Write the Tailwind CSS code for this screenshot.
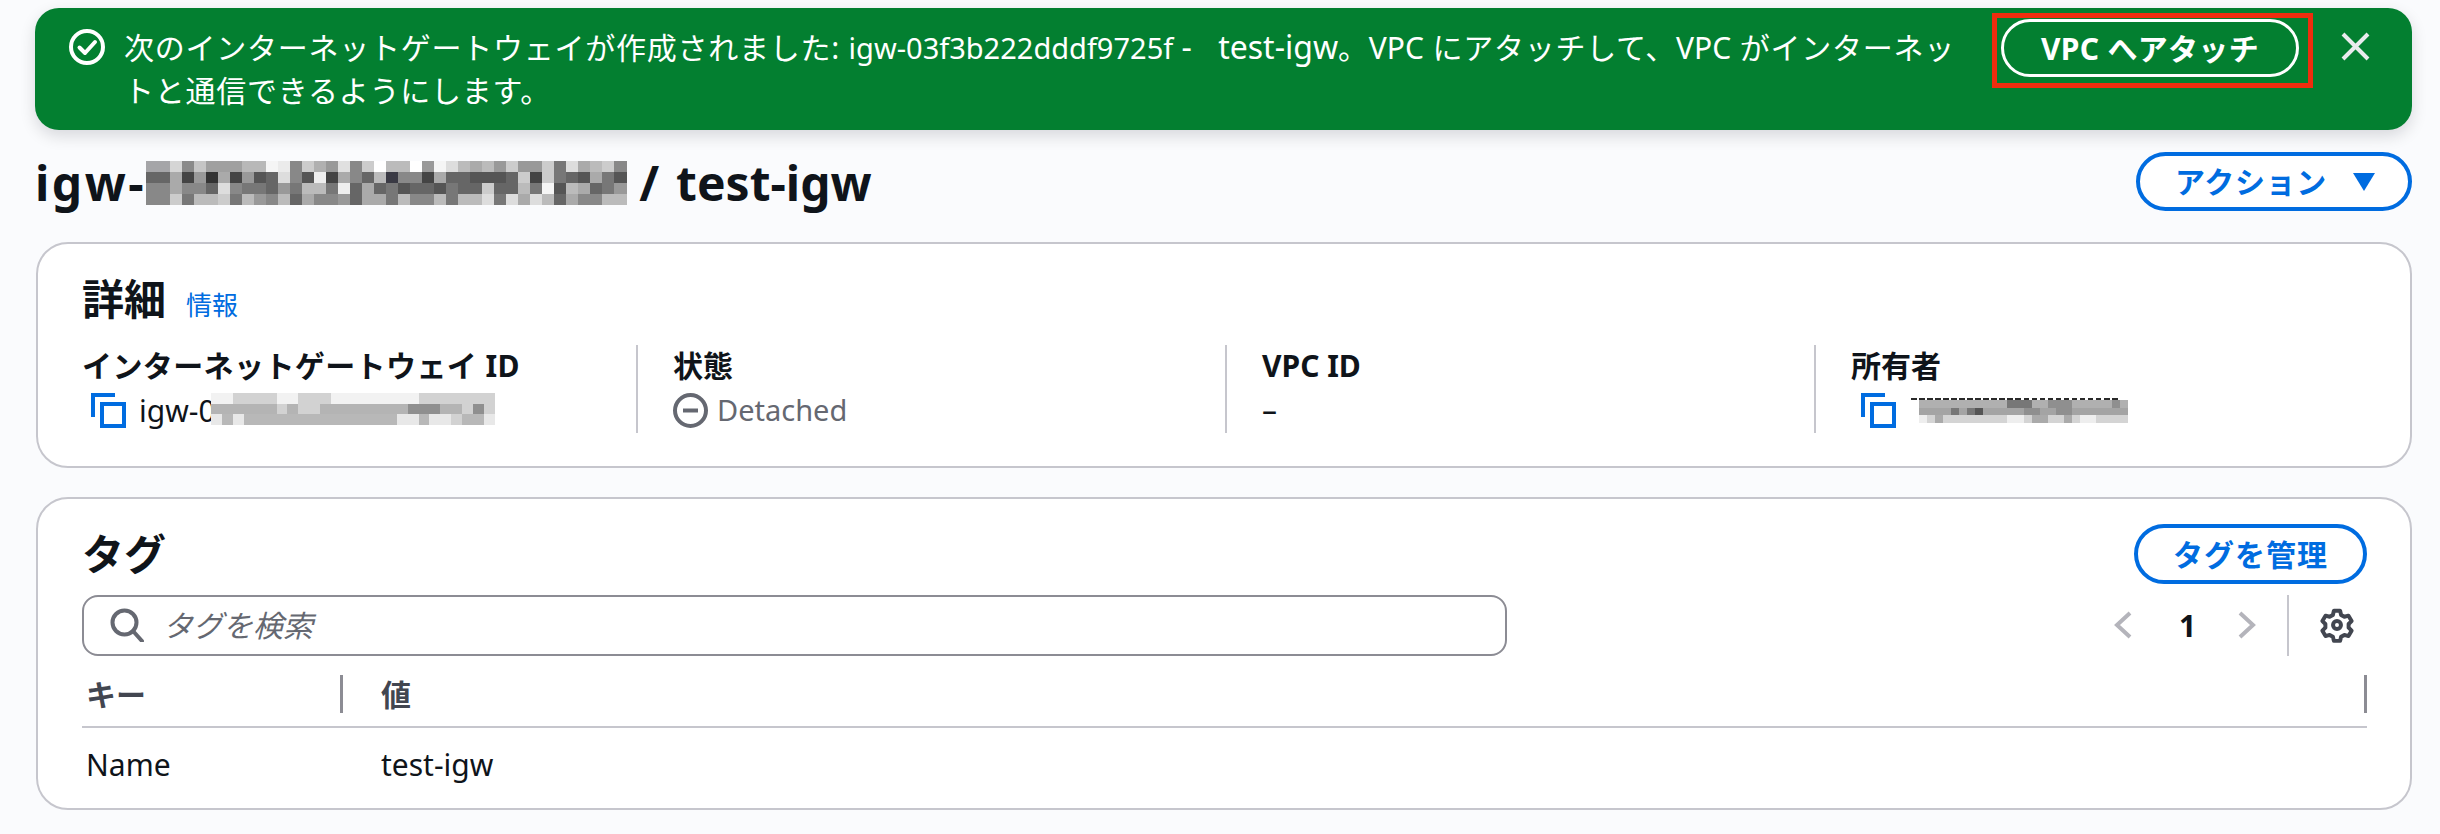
<!DOCTYPE html>
<html lang="ja">
<head>
<meta charset="utf-8">
<script src="https://cdn.jsdelivr.net/npm/@tailwindcss/browser@4"></script>
</head>
<body class="bg-[#fafbfd] w-[2440px] h-[834px] overflow-hidden font-['Noto_Sans','Noto_Sans_CJK_JP',sans-serif] text-[#0f141a] text-[30px]">
<div class="pl-[35px] pr-[28px] pt-[8px]">
  <!-- flash -->
  <div class="relative h-[122px] bg-[#037f30] rounded-[24px] shadow-[0_6px_16px_rgba(0,7,22,0.14)] flex text-white pl-[33px] pr-[42px]">
    <svg class="w-[38px] h-[38px] mt-[20px] shrink-0" viewBox="0 0 38 38" fill="none" stroke="#fff" stroke-width="4"><circle cx="19" cy="19" r="16"/><path d="M11.5 19.5l5.5 5.5 10-11" stroke-linecap="round" stroke-linejoin="round"/></svg>
    <div class="ml-[18px] w-[1877px] leading-[43px] pt-[17px] tracking-[0.75px] shrink-0">次のインターネットゲートウェイが作成されました: <span class="text-[29px] tracking-normal">igw-03f3b222dddf9725f</span><span class="text-[32px] tracking-normal"> <span class="mr-[18px]">-</span> test-igw</span>。<span class="tracking-normal">VPC</span> にアタッチして、<span class="tracking-normal">VPC</span> がインターネッ<br>トと通信できるようにします。</div>
    <div class="mt-[11px] w-[298px] h-[58px] border-[3px] border-white rounded-full flex items-center justify-center font-bold shrink-0 tracking-[0.3px]">VPC へアタッチ</div>
    <svg class="ml-[42px] mt-[24px] w-[29px] h-[29px] shrink-0" viewBox="0 0 29 29" fill="none" stroke="#e9ebed" stroke-width="4"><path d="M2 2l25 25M27 2L2 27"/></svg>
    <div class="absolute left-[1957px] top-[5px] w-[321px] h-[75px] border-[5px] border-[#ef2d0e]"></div>
  </div>

  <!-- title -->
  <div class="flex items-center justify-between mt-[22px] h-[59px]">
    <h1 class="flex items-center text-[48px] font-bold leading-[59px] whitespace-nowrap pt-[2px]"><span class="tracking-[2.5px]">igw-</span><svg class="w-[481px] h-[44px]" viewBox="42 27 1443 132" preserveAspectRatio="none" shape-rendering="crispEdges"><g>
<rect x="42" y="27" width="73" height="33" fill="#a5a5a8"/><rect x="115" y="27" width="35" height="33" fill="#d5d5d5"/><rect x="150" y="27" width="37" height="33" fill="#8a8a8a"/><rect x="187" y="27" width="36" height="33" fill="#c5c5c5"/><rect x="223" y="27" width="107" height="33" fill="#a0a0a0"/><rect x="330" y="27" width="73" height="33" fill="#b8b8b8"/><rect x="403" y="27" width="36" height="33" fill="#f5f5f5"/><rect x="439" y="27" width="36" height="33" fill="#ebebeb"/><rect x="475" y="27" width="36" height="33" fill="#888"/><rect x="511" y="27" width="36" height="33" fill="#ccc"/><rect x="547" y="27" width="36" height="33" fill="#b0b0b0"/><rect x="583" y="27" width="36" height="33" fill="#999"/><rect x="619" y="27" width="36" height="33" fill="#e0e0e0"/><rect x="655" y="27" width="36" height="33" fill="#888"/><rect x="691" y="27" width="36" height="33" fill="#ccc"/><rect x="727" y="27" width="36" height="33" fill="#fff"/><rect x="763" y="27" width="72" height="33" fill="#bbb"/><rect x="835" y="27" width="36" height="33" fill="#fff"/><rect x="871" y="27" width="36" height="33" fill="#999"/><rect x="907" y="27" width="36" height="33" fill="#f5f5f5"/><rect x="943" y="27" width="36" height="33" fill="#ddd"/><rect x="979" y="27" width="36" height="33" fill="#bbb"/><rect x="1015" y="27" width="36" height="33" fill="#aaa"/><rect x="1051" y="27" width="36" height="33" fill="#bbb"/><rect x="1087" y="27" width="36" height="33" fill="#999"/><rect x="1123" y="27" width="36" height="33" fill="#ccc"/><rect x="1159" y="27" width="72" height="33" fill="#999"/><rect x="1231" y="27" width="36" height="33" fill="#ccc"/><rect x="1267" y="27" width="36" height="33" fill="#777"/><rect x="1303" y="27" width="36" height="33" fill="#ddd"/><rect x="1339" y="27" width="36" height="33" fill="#aaa"/><rect x="1375" y="27" width="36" height="33" fill="#bbb"/><rect x="1411" y="27" width="36" height="33" fill="#ccc"/><rect x="1447" y="27" width="38" height="33" fill="#888"/>
<rect x="42" y="60" width="73" height="33" fill="#666"/><rect x="115" y="60" width="35" height="33" fill="#aaa"/><rect x="150" y="60" width="37" height="33" fill="#444"/><rect x="187" y="60" width="36" height="33" fill="#999"/><rect x="223" y="60" width="36" height="33" fill="#333"/><rect x="259" y="60" width="36" height="33" fill="#aaa"/><rect x="295" y="60" width="36" height="33" fill="#444"/><rect x="331" y="60" width="36" height="33" fill="#999"/><rect x="367" y="60" width="36" height="33" fill="#555"/><rect x="403" y="60" width="36" height="33" fill="#666"/><rect x="439" y="60" width="36" height="33" fill="#ddd"/><rect x="475" y="60" width="36" height="33" fill="#888"/><rect x="511" y="60" width="36" height="33" fill="#555"/><rect x="547" y="60" width="36" height="33" fill="#eee"/><rect x="583" y="60" width="36" height="33" fill="#444"/><rect x="619" y="60" width="36" height="33" fill="#aaa"/><rect x="655" y="60" width="36" height="33" fill="#888"/><rect x="691" y="60" width="36" height="33" fill="#666"/><rect x="727" y="60" width="36" height="33" fill="#bbb"/><rect x="763" y="60" width="36" height="33" fill="#3a3a44"/><rect x="799" y="60" width="72" height="33" fill="#888"/><rect x="871" y="60" width="36" height="33" fill="#444"/><rect x="907" y="60" width="36" height="33" fill="#aaa"/><rect x="943" y="60" width="72" height="33" fill="#666"/><rect x="1015" y="60" width="108" height="33" fill="#555"/><rect x="1123" y="60" width="36" height="33" fill="#666"/><rect x="1159" y="60" width="36" height="33" fill="#ccc"/><rect x="1195" y="60" width="36" height="33" fill="#444"/><rect x="1231" y="60" width="36" height="33" fill="#ccc"/><rect x="1267" y="60" width="36" height="33" fill="#777"/><rect x="1303" y="60" width="36" height="33" fill="#666"/><rect x="1339" y="60" width="36" height="33" fill="#555"/><rect x="1375" y="60" width="36" height="33" fill="#aaa"/><rect x="1411" y="60" width="36" height="33" fill="#777"/><rect x="1447" y="60" width="38" height="33" fill="#555"/>
<rect x="42" y="93" width="73" height="33" fill="#888"/><rect x="115" y="93" width="35" height="33" fill="#aaa"/><rect x="150" y="93" width="73" height="33" fill="#888"/><rect x="223" y="93" width="36" height="33" fill="#666"/><rect x="259" y="93" width="36" height="33" fill="#ddd"/><rect x="295" y="93" width="36" height="33" fill="#888"/><rect x="331" y="93" width="72" height="33" fill="#777"/><rect x="403" y="93" width="36" height="33" fill="#666"/><rect x="439" y="93" width="36" height="33" fill="#999"/><rect x="475" y="93" width="36" height="33" fill="#777"/><rect x="511" y="93" width="72" height="33" fill="#bbb"/><rect x="583" y="93" width="36" height="33" fill="#777"/><rect x="619" y="93" width="36" height="33" fill="#eee"/><rect x="655" y="93" width="36" height="33" fill="#666"/><rect x="691" y="93" width="36" height="33" fill="#aaa"/><rect x="727" y="93" width="36" height="33" fill="#666"/><rect x="763" y="93" width="36" height="33" fill="#777"/><rect x="799" y="93" width="36" height="33" fill="#555"/><rect x="835" y="93" width="72" height="33" fill="#666"/><rect x="907" y="93" width="36" height="33" fill="#555"/><rect x="943" y="93" width="36" height="33" fill="#777"/><rect x="979" y="93" width="72" height="33" fill="#666"/><rect x="1051" y="93" width="36" height="33" fill="#ccc"/><rect x="1087" y="93" width="72" height="33" fill="#666"/><rect x="1159" y="93" width="36" height="33" fill="#bbb"/><rect x="1195" y="93" width="36" height="33" fill="#777"/><rect x="1231" y="93" width="36" height="33" fill="#f5f5f5"/><rect x="1267" y="93" width="36" height="33" fill="#555"/><rect x="1303" y="93" width="36" height="33" fill="#bbb"/><rect x="1339" y="93" width="36" height="33" fill="#aaa"/><rect x="1375" y="93" width="36" height="33" fill="#666"/><rect x="1411" y="93" width="36" height="33" fill="#777"/><rect x="1447" y="93" width="38" height="33" fill="#999"/>
<rect x="42" y="126" width="73" height="33" fill="#888"/><rect x="115" y="126" width="35" height="33" fill="#ccc"/><rect x="150" y="126" width="37" height="33" fill="#777"/><rect x="187" y="126" width="72" height="33" fill="#bbb"/><rect x="259" y="126" width="36" height="33" fill="#ccc"/><rect x="295" y="126" width="36" height="33" fill="#777"/><rect x="331" y="126" width="36" height="33" fill="#bbb"/><rect x="367" y="126" width="36" height="33" fill="#999"/><rect x="403" y="126" width="36" height="33" fill="#888"/><rect x="439" y="126" width="36" height="33" fill="#bbb"/><rect x="475" y="126" width="36" height="33" fill="#666"/><rect x="511" y="126" width="36" height="33" fill="#aaa"/><rect x="547" y="126" width="72" height="33" fill="#888"/><rect x="619" y="126" width="36" height="33" fill="#999"/><rect x="655" y="126" width="36" height="33" fill="#666"/><rect x="691" y="126" width="72" height="33" fill="#aaa"/><rect x="763" y="126" width="36" height="33" fill="#777"/><rect x="799" y="126" width="36" height="33" fill="#bbb"/><rect x="835" y="126" width="72" height="33" fill="#888"/><rect x="907" y="126" width="36" height="33" fill="#bbb"/><rect x="943" y="126" width="36" height="33" fill="#777"/><rect x="979" y="126" width="72" height="33" fill="#bbb"/><rect x="1051" y="126" width="36" height="33" fill="#ddd"/><rect x="1087" y="126" width="36" height="33" fill="#777"/><rect x="1123" y="126" width="36" height="33" fill="#ddd"/><rect x="1159" y="126" width="36" height="33" fill="#aaa"/><rect x="1195" y="126" width="36" height="33" fill="#ddd"/><rect x="1231" y="126" width="36" height="33" fill="#bbb"/><rect x="1267" y="126" width="36" height="33" fill="#666"/><rect x="1303" y="126" width="36" height="33" fill="#aaa"/><rect x="1339" y="126" width="72" height="33" fill="#888"/><rect x="1411" y="126" width="74" height="33" fill="#bbb"/>
</g></svg><span class="ml-[12px] mr-[17px]">/</span>test-igw</h1>
    <div class="w-[276px] h-[59px] border-[4px] border-[#006ce0] rounded-full bg-white flex items-center pl-[35px] text-[#006ce0] font-bold shrink-0 tracking-[0.7px]">アクション<svg class="ml-[26px] w-[22px] h-[18px]" viewBox="0 0 22 18" fill="#006ce0"><path d="M0 0h22L11 18z"/></svg></div>
  </div>

  <!-- details card -->
  <div class="ml-[1px] mt-[31px] h-[226px] bg-white rounded-[32px] border-2 border-[#c6c6cd] pl-[44px] pt-[25px]">
    <div class="flex items-baseline h-[60px]"><span class="text-[42px] font-bold leading-[60px]">詳細</span><span class="ml-[20px] text-[26px] text-[#006ce0]">情報</span></div>
    <div class="grid grid-cols-[554px_589px_589px_1fr] mt-[16px]">
      <div class="h-[88px]">
        <div class="font-bold leading-[42px] h-[44px] tracking-[0.4px]">インターネットゲートウェイ ID</div>
        <div class="flex items-center h-[42px]"><svg class="w-[35px] h-[35px] ml-[9px] mr-[13px]" viewBox="0 0 35 35" fill="none" stroke="#006ce0" stroke-width="4"><path d="M2 24V2h22"/><path d="M11 11h22v22H11z"/></svg><span class="whitespace-pre">igw-0</span><svg class="w-[284px] h-[32px] ml-[-5px] mb-[2px]" viewBox="0 0 26 3" preserveAspectRatio="none" shape-rendering="crispEdges"><path fill="#e4e4e4" d="M0 0h26v1H0z"/><path fill="#b4b4b4" d="M0 1h26v1H0z"/><path fill="#b8b8b8" d="M0 2h26v1H0z"/><path fill="#f2f2f2" d="M0 0h2v1H0zM6 0h2v1H6zM11 0h8v1h-8z"/><path fill="#d2d2d2" d="M2 0h4v1H2zM8 0h3v1H8zM19 0h7v1h-7zM6 1h1v1H6zM8 1h2v1H8zM23 1h3v1h-3zM22 2h1v1h-1z"/><path fill="#8f8f8f" d="M18 1h3v1h-3zM24 1h1v1h-1z"/><path fill="#e8e8e8" d="M0 2h1v1H0zM2 2h1v1H2zM17 2h2v1h-2zM20 2h2v1h-2zM25 2h1v1h-1z"/></svg></div>
      </div>
      <div class="border-l-2 border-[#c6c6cd] pl-[35px] h-[88px]">
        <div class="font-bold leading-[42px] h-[44px]">状態</div>
        <div class="flex items-center h-[42px] text-[#656871] text-[29px]"><svg class="w-[35px] h-[35px] mr-[9px]" viewBox="0 0 35 35" fill="none" stroke="#656871" stroke-width="4"><circle cx="17.500" cy="17.500" r="15.500"/><path d="M10 17.500h15"/></svg>Detached</div>
      </div>
      <div class="border-l-2 border-[#c6c6cd] pl-[35px] h-[88px]">
        <div class="font-bold leading-[42px] h-[44px]">VPC ID</div>
        <div class="h-[42px] leading-[42px]">–</div>
      </div>
      <div class="border-l-2 border-[#c6c6cd] pl-[35px] h-[88px]">
        <div class="font-bold leading-[42px] h-[44px]">所有者</div>
        <div class="flex items-center h-[42px]"><svg class="w-[35px] h-[35px] ml-[10px] mr-[14px]" viewBox="0 0 35 35" fill="none" stroke="#006ce0" stroke-width="4"><path d="M2 24V2h22"/><path d="M11 11h22v22H11z"/></svg><svg class="w-[217px] h-[25px] ml-[1px]" viewBox="0 0 27 3.300" preserveAspectRatio="none" shape-rendering="crispEdges"><path stroke="#2a2a2a" stroke-width=".3" stroke-dasharray=".7 .3" fill="none" d="M0 .15h26"/><path fill="#b0b0b0" d="M1 .3h26v1H1z"/><path fill="#a4a4a4" d="M1 1.300h26v1H1z"/><path fill="#d4d4d4" d="M1 2.300h26v1H1z"/><path fill="#777" d="M5 1.300h1v1H5zM7 1.300h1v1H7zM12 .3h3v1h-3z"/><path fill="#555" d="M8 1.300h1v1H8z"/><path fill="#8f8f8f" d="M14 1.300h2v1h-2zM18 1.300h2v1h-2zM17 .3h3v1h-3zM25 .3h1v1h-1z"/><path fill="#eee" d="M1 2.300h1v1H1zM12 2.300h2v1h-2zM21 2.300h2v1h-2z"/><path fill="#aaa" d="M3 2.300h1v1H3zM15 2.300h2v1h-2zM19 2.300h1v1h-1z"/></svg></div>
      </div>
    </div>
  </div>

  <!-- tags card -->
  <div class="ml-[1px] mt-[29px] h-[313px] bg-white rounded-[32px] border-2 border-[#c6c6cd] pl-[44px] pr-[43px]">
    <div class="flex justify-between items-start pt-[25px] h-[95px]">
      <span class="text-[42px] font-bold leading-[60px]">タグ</span>
      <div class="w-[233px] h-[60px] border-[4px] border-[#006ce0] rounded-full flex items-center justify-center text-[#006ce0] font-bold tracking-[1px]">タグを管理</div>
    </div>
    <div class="flex items-center h-[62px]">
      <div class="w-[1425px] h-[61px] border-2 border-[#8c8c94] rounded-[16px] flex items-center pl-[26px] text-[#656871] italic shrink-0">
        <svg class="w-[34px] h-[34px] mr-[19px] shrink-0" viewBox="0 0 34 34" fill="none" stroke="#656871" stroke-width="4"><circle cx="14.500" cy="14.500" r="12"/><path d="M23 23l9 10" stroke-linecap="round"/></svg>タグを検索
      </div>
      <div class="flex-1 flex items-center h-[61px] pl-[607px]">
        <svg class="w-[18px] h-[28px] shrink-0" viewBox="0 0 18 28" fill="none" stroke="#b4b4bb" stroke-width="4"><path d="M16 2L3 14l13 12"/></svg>
        <span class="w-[59px] ml-[47px] font-bold shrink-0">1</span>
        <svg class="w-[18px] h-[28px] shrink-0" viewBox="0 0 18 28" fill="none" stroke="#b4b4bb" stroke-width="4"><path d="M2 2l13 12L2 26"/></svg>
        <div class="w-[2px] h-[61px] bg-[#c6c6cd] ml-[31px] shrink-0"></div>
        <svg class="w-[34px] h-[36px] ml-[31px] shrink-0" viewBox="0 0 24 24" fill="none" stroke="#424650" stroke-width="2.800" stroke-linejoin="round"><path d="M9.800 2h4.400l.7 2.900 2.300 1.300 2.900-.8 2.200 3.800-2.100 2.100v2.600l2.100 2.100-2.200 3.800-2.900-.8-2.300 1.300-.7 2.900H9.800l-.7-2.900-2.300-1.300-2.900.8-2.200-3.800 2.100-2.100v-2.600L1.700 9.200l2.200-3.800 2.900.8 2.300-1.300z"/><circle cx="12" cy="12" r="2.800"/></svg>
      </div>
    </div>
    <div class="flex items-center h-[72px] border-b-2 border-[#c6c6cd] text-[#424650] font-bold pt-[6px]">
      <span class="w-[261px] pl-[4px] flex items-center justify-between"><span>キー</span><span class="w-[3px] h-[38px] bg-[#8c8c94]"></span></span>
      <span class="flex-1 pl-[38px]">値</span>
      <span class="w-[3px] h-[38px] bg-[#8c8c94]"></span>
    </div>
    <div class="flex items-center h-[72px] pl-[4px]"><span class="w-[295px]">Name</span><span>test-igw</span></div>
  </div>
</div>
</body>
</html>
